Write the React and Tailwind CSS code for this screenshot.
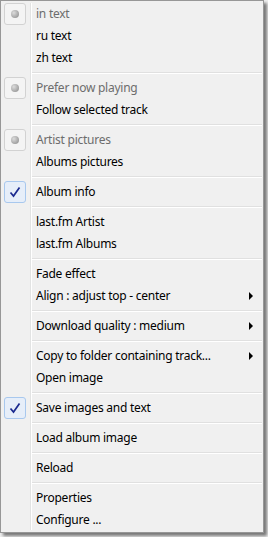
import React from "react";

const items = [
    { label: "in text", radio: true, disabled: true },
    { label: "ru text" },
    { label: "zh text" },
    "sep",
    { label: "Prefer now playing", radio: true, disabled: true },
    { label: "Follow selected track" },
    "sep",
    { label: "Artist pictures", radio: true, disabled: true },
    { label: "Albums pictures" },
    "sep",
    { label: "Album info", check: true },
    "sep",
    { label: "last.fm Artist" },
    { label: "last.fm Albums" },
    "sep",
    { label: "Fade effect" },
    { label: "Align : adjust top - center", sub: true },
    "sep",
    { label: "Download quality : medium", sub: true },
    "sep",
    { label: "Copy to folder containing track...", sub: true },
    { label: "Open image" },
    "sep",
    { label: "Save images and text", check: true },
    "sep",
    { label: "Load album image" },
    "sep",
    { label: "Reload" },
    "sep",
    { label: "Properties" },
    { label: "Configure ..." },
];

const Bullet = () => (
    <div className="flex h-[22px] w-[22px] items-center justify-center rounded-[3px] border border-[#d2d2d2] bg-[#f4f4f4]">
        <div className="h-[8px] w-[8px] rounded-full bg-[radial-gradient(circle_at_35%_35%,#dcdcdc,#888888)]" />
    </div>
);

const Check = () => (
    <div className="flex h-[22px] w-[22px] items-center justify-center rounded-[3px] border border-[#a8c8ee] bg-[#e6eef9]">
        <svg width="12" height="12" viewBox="0 0 12 12">
            <path d="M1.5 6.5 L4.5 10 L10.5 1.5" fill="none" stroke="#1b2a8f" strokeWidth="1.7" />
        </svg>
    </div>
);

export default function App() {
    return (
        <div className="h-[537px] w-[268px] bg-[#f0f0f0]" style={{ fontFamily: '"Noto Sans", sans-serif' }}>
            <div className="relative h-[533px] w-[264px] border border-[#979797] bg-[#f0f0f0] pt-[2px] shadow-[3px_3px_3px_rgba(0,0,0,0.5)]">
                {/* gutter line */}
                <div className="absolute left-[29px] top-[2px] bottom-[2px] w-[2px] border-l border-[#e2e3e3] bg-white" />
                {items.map((it, i) =>
                    it === "sep" ? (
                        <div key={i} className="flex h-[8px] items-center pl-[31px] pr-[1px]">
                            <div className="h-[2px] w-full border-t border-[#e0e0e0] bg-white" />
                        </div>
                    ) : (
                        <div key={i} className="relative flex h-[22px] items-center">
                            <div className="flex w-[30px] justify-start pl-[3px]">
                                {it.radio && <Bullet />}
                                {it.check && <Check />}
                            </div>
                            <span className={`pl-[5px] text-[12px] leading-none tracking-[-0.25px] ${it.disabled ? "text-[#6d6d6d]" : "text-black"}`}>
                                {it.label}
                            </span>
                            {it.sub && (
                                <div className="absolute right-[10px] top-[7px] h-0 w-0 border-y-[4px] border-l-[4px] border-y-transparent border-l-black" />
                            )}
                        </div>
                    )
                )}
            </div>
        </div>
    );
}
